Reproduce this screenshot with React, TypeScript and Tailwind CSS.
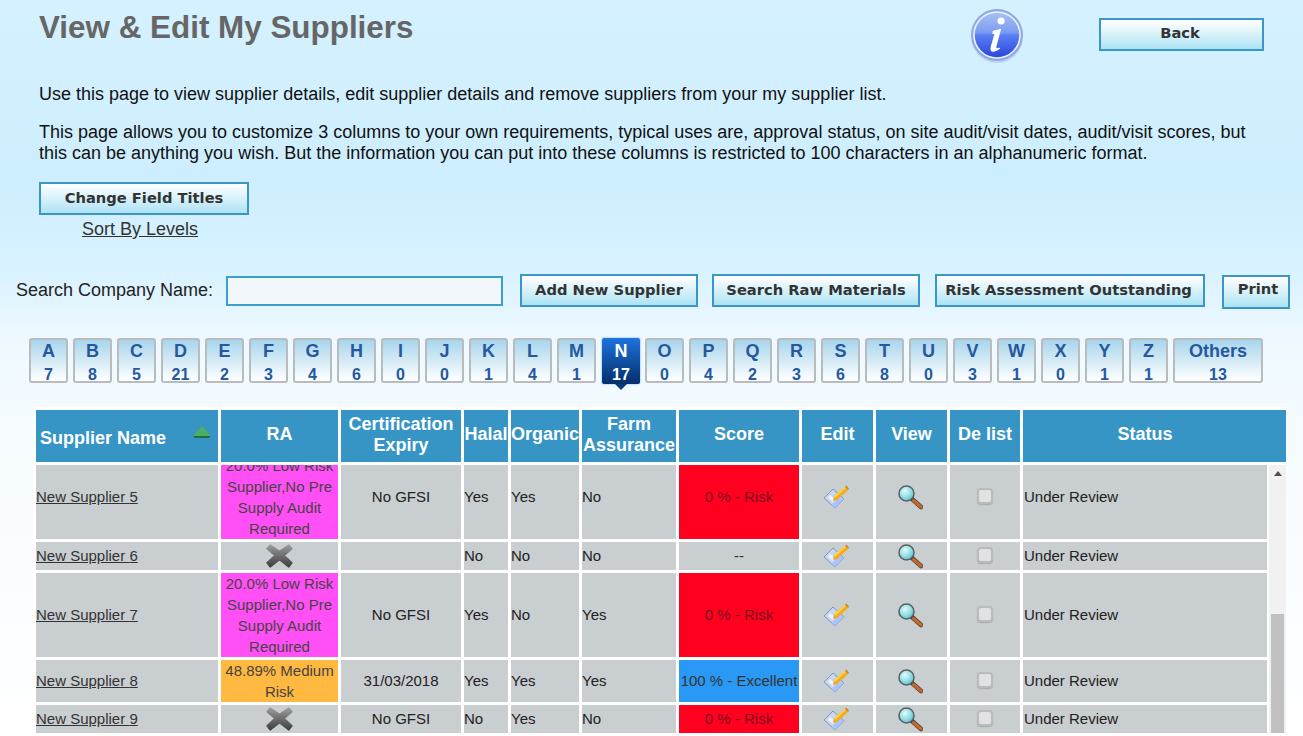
import React from "react";

const letters: [string, number][] = [["A",7],["B",8],["C",5],["D",21],["E",2],["F",3],["G",4],["H",6],["I",0],["J",0],["K",1],["L",4],["M",1],["N",17],["O",0],["P",4],["Q",2],["R",3],["S",6],["T",8],["U",0],["V",3],["W",1],["X",0],["Y",1],["Z",1]];

const bodyCols = "grid grid-cols-[182px_117px_120px_44px_68px_94px_120px_71px_71px_70px_244px] gap-[3px]";
const headCols = "grid grid-cols-[182px_117px_120px_44px_68px_94px_120px_71px_71px_70px_263px] gap-[3px]";
const btn = "h-[33px] border-2 border-[#3a96c4] bg-gradient-to-b from-white to-[#ace3f5] text-[#333] font-bold text-[14.700px] font-['DejaVu_Sans',sans-serif] leading-none pb-[1px]";

function InfoIcon() {
  return (
    <svg width="56" height="56" viewBox="0 0 54 54">
      <defs>
        <linearGradient id="ig" x1="0" y1="0" x2="0" y2="1">
          <stop offset="0" stopColor="#a9c1f5" />
          <stop offset="0.45" stopColor="#7a9bf0" />
          <stop offset="0.5" stopColor="#5a80f4" />
          <stop offset="1" stopColor="#2a46dc" />
        </linearGradient>
      </defs>
      <circle cx="27" cy="29" r="25" fill="#8fa6c8" opacity="0.35" />
      <circle cx="27" cy="27" r="25" fill="#8ea6ea" />
      <circle cx="27" cy="27" r="23" fill="#eef3ff" />
      <circle cx="27" cy="27" r="21.5" fill="url(#ig)" />
      <circle cx="31" cy="13.5" r="3.4" fill="#fff" />
      <path d="M23 23 L31 21 L26.5 38 Q26 41 29 39 L30 40 Q25 44 22 43 Q20 42 21 38 L24.500 26 L22.500 26 Z" fill="#fff" />
    </svg>
  );
}

function EditIcon() {
  return (
    <svg className="-ml-[4px]" width="28" height="26" viewBox="0 0 28 26">
      <path d="M2 14 L11 5 L22 15 L13 24 Z" fill="#c6d6f5" stroke="#7f96b8" strokeWidth="1" />
      <path d="M8 11 L13 15 L11 18 L6 14 Z" fill="#eef3fb" />
      <path d="M14 16 L19 13 L22 15 L13 24 L10 21 Z" fill="#a9c5fb" />
      <path d="M12 12 L23 3 L26 6 L15 16 L11 17 Z" fill="#f6a91e" />
      <path d="M12 12 L23 3 L24 4 L13 14 Z" fill="#ffd640" />
      <path d="M23 3 L24.500 1.500 L27 4.500 L26 6 Z" fill="#d2862a" />
    </svg>
  );
}

function MagIcon() {
  return (
    <svg className="-ml-[4px]" width="26" height="26" viewBox="0 0 26 26">
      <defs>
        <radialGradient id="mg" cx="0.4" cy="0.35" r="0.7">
          <stop offset="0" stopColor="#e5fafa" />
          <stop offset="0.6" stopColor="#8ddde3" />
          <stop offset="1" stopColor="#5cb8c8" />
        </radialGradient>
      </defs>
      <path d="M15 15 L24 23" stroke="#4b4038" strokeWidth="4.500" strokeLinecap="round" />
      <path d="M16.500 16.500 L24 23" stroke="#c46a28" strokeWidth="3" strokeLinecap="round" />
      <circle cx="9.500" cy="9.500" r="7.500" fill="url(#mg)" stroke="#5a5f62" strokeWidth="1.500" />
    </svg>
  );
}

function XIcon() {
  return (
    <svg className="-ml-[1px] -mt-[1px]" width="29" height="27" viewBox="0 0 28 26">
      <defs>
        <linearGradient id="xg" x1="0" y1="0" x2="0" y2="1">
          <stop offset="0" stopColor="#9a9a9a" />
          <stop offset="1" stopColor="#3f3f3f" />
        </linearGradient>
      </defs>
      <path d="M5 3 L14 9 L23 3 L26 6.500 L18.500 13 L26 20 L23 24 L14 17 L5 24 L2 20 L9.500 13 L2 6.500 Z" fill="url(#xg)" stroke="url(#xg)" strokeWidth="1.500" strokeLinejoin="round" />
    </svg>
  );
}

function Box() {
  return <span className="block w-[16px] h-[16px] -mt-[3px] rounded-[4px] bg-[#e2e2e2] border-2 border-[#b9bcbc] shadow-[0_1px_1px_#aaa]" />;
}

type Row = { n: number; h: string; ra: React.ReactNode; raBg?: string; cert: string; halal: string; org: string; farm: string; score: string; scoreBg?: string };

const rows: Row[] = [
  { n: 5, h: "h-[84px]", ra: "20.0% Low Risk Supplier,No Pre Supply Audit Required", raBg: "bg-[#ff4ff5]", cert: "No GFSI", halal: "Yes", org: "Yes", farm: "No", score: "0 % - Risk", scoreBg: "bg-[#ff001f]" },
  { n: 6, h: "h-[28px]", ra: <XIcon />, cert: "", halal: "No", org: "No", farm: "No", score: "--" },
  { n: 7, h: "h-[84px]", ra: "20.0% Low Risk Supplier,No Pre Supply Audit Required", raBg: "bg-[#ff4ff5]", cert: "No GFSI", halal: "Yes", org: "No", farm: "Yes", score: "0 % - Risk", scoreBg: "bg-[#ff001f]" },
  { n: 8, h: "h-[42px]", ra: "48.89% Medium Risk", raBg: "bg-[#ffb840]", cert: "31/03/2018", halal: "Yes", org: "Yes", farm: "Yes", score: "100 % - Excellent", scoreBg: "bg-[#2a98f5]" },
  { n: 9, h: "h-[28px]", ra: <XIcon />, cert: "No GFSI", halal: "No", org: "Yes", farm: "No", score: "0 % - Risk", scoreBg: "bg-[#ff001f]" },
];

const cell = "bg-[#c9ced0] flex items-center";
const head = "bg-[#3695c5] text-white font-bold text-[18px] leading-[21px] flex items-center justify-center text-center pb-[3px]";

export default function App() {
  return (
    <div className="h-[736px] w-[1303px] overflow-hidden font-['Liberation_Sans',Arial,sans-serif] text-[18px] text-[#111] bg-[linear-gradient(180deg,#d5f1ff_0px,#cdeeff_180px,#d8f2ff_270px,#eef9ff_340px,#f5fbff_420px,#ffffff_736px)]">
      <div className="flex items-start pl-[39px] h-[84px]">
        <h1 className="w-[930px] pt-[10px] text-[31.400px] leading-[36px] font-bold text-[#666]">View &amp; Edit My Suppliers</h1>
        <div className="pt-[7px] w-[130px]"><InfoIcon /></div>
        <button className={`${btn} mt-[18px] w-[165px] !pb-[3px] pr-[3px]`}>Back</button>
      </div>
      <p className="pl-[39px] pt-[1px] leading-[18px]">Use this page to view supplier details, edit supplier details and remove suppliers from your my supplier list.</p>
      <p className="pl-[39px] pr-[50px] mt-[19px] leading-[21px]">This page allows you to customize 3 columns to your own requirements, typical uses are, approval status, on site audit/visit dates, audit/visit scores, but this can be anything you wish. But the information you can put into these columns is restricted to 100 characters in an alphanumeric format.</p>
      <div className="pl-[39px] mt-[18px]">
        <button className={`${btn} w-[210px] block`}>Change Field Titles</button>
        <a className="block ml-[43px] mt-[4px] text-[#333] underline text-[18px] leading-[20px]">Sort By Levels</a>
      </div>
      <div className="flex items-center pl-[16px] mt-[35px] h-[33px]">
        <span className="w-[210px] text-[#222] text-[18px]">Search Company Name:</span>
        <input className="w-[277px] h-[30px] border-2 border-[#3aa0cc] bg-[#f0f6fa]" />
        <button className={`${btn} ml-[17px] w-[178px]`}>Add New Supplier</button>
        <button className={`${btn} ml-[14px] w-[208px]`}>Search Raw Materials</button>
        <button className={`${btn} ml-[15px] w-[270px] pr-[3px]`}>Risk Assessment Outstanding</button>
        <button className={`${btn} ml-[17px] w-[68px] mt-[2px] h-[34px] !pb-[4px] pl-[4px]`}>Print</button>
      </div>
      <div className="flex items-start pl-[29px] mt-[31px] h-[69px] gap-[5px] font-bold text-[#2458a0] text-center">
        {letters.map(([l, c]) =>
          l === "N" ? (
            <div key={l} className="relative w-[38px] h-[46px] ml-[1px] rounded-[2px] bg-gradient-to-b from-[#1e73de] to-[#04306c] text-white shadow-[0_0_2px_#5aa0f0] text-[18px] leading-[22px] pt-[2px]">
              <div>{l}</div>
              <div className="text-[16px] leading-[20px] mt-[3px]">{c}</div>
              <span className="absolute left-[13px] top-[46px] border-x-[6px] border-x-transparent border-t-[6px] border-t-[#0a3a78]" />
            </div>
          ) : (
            <div key={l} className="w-[39px] h-[45px] rounded-[3px] border-2 border-[#b9bcbe] bg-gradient-to-b from-[#a8d5ec] to-[#ffffff] text-[18px] leading-[22px]">
              <div>{l}</div>
              <div className="text-[16px] leading-[19px] mt-[3px]">{c}</div>
            </div>
          )
        )}
        <div className="w-[90px] h-[45px] rounded-[3px] border-2 border-[#b9bcbe] bg-gradient-to-b from-[#a8d5ec] to-[#ffffff] text-[18px] leading-[22px]">
          <div>Others</div>
          <div className="text-[16px] leading-[19px] mt-[3px]">13</div>
        </div>
      </div>
      <div className="ml-[33px] w-[1253px] bg-white pt-[3px] pl-[3px]">
        <div className={`${headCols} h-[52px]`}>
          <div className={`${head} !justify-start pl-[4px] relative !pb-0 pt-[4px]`}>
            Supplier Name
            <svg className="absolute left-[156px] top-[15px]" width="20" height="14" viewBox="0 0 20 14">
              <path d="M10 1 L19 11 L1 11 Z" fill="#4caf62" />
              <path d="M1 11 L19 11 L17 13 L3 13 Z" fill="#1f6e4a" />
            </svg>
          </div>
          <div className={head}>RA</div>
          <div className={`${head} !pb-[2px]`}>Certification Expiry</div>
          <div className={head}>Halal</div>
          <div className={head}>Organic</div>
          <div className={`${head} !pb-[2px]`}>Farm Assurance</div>
          <div className={head}>Score</div>
          <div className={head}>Edit</div>
          <div className={head}>View</div>
          <div className={head}>De list</div>
          <div className={`${head} pr-[19px]`}>Status</div>
        </div>
        <div className="flex mt-[3px] h-[268px] overflow-hidden text-[15px] text-[#222]">
          <div className="w-[1231px] shrink-0">
            <div className="-mt-[10px] flex flex-col gap-[3px]">
              {rows.map((r) => (
                <div key={r.n} className={`${bodyCols} ${r.h}`}>
                  <div className={cell}><a className="underline text-[#333]">New Supplier {r.n}</a></div>
                  <div className={`${r.raBg ?? "bg-[#c9ced0]"} flex items-center justify-center text-center leading-[21px] text-[#444]`}>{r.ra}</div>
                  <div className={`${cell} justify-center`}>{r.cert}</div>
                  <div className={cell}>{r.halal}</div>
                  <div className={cell}>{r.org}</div>
                  <div className={cell}>{r.farm}</div>
                  <div className={`${r.scoreBg ?? "bg-[#c9ced0]"} flex items-center justify-center ${r.scoreBg === "bg-[#ff001f]" ? "text-[#7a1020]" : "text-[#333]"}`}>{r.score}</div>
                  <div className={`${cell} justify-center`}><EditIcon /></div>
                  <div className={`${cell} justify-center`}><MagIcon /></div>
                  <div className={`${cell} justify-center`}><Box /></div>
                  <div className={`${cell} pl-[1px]`}>Under Review</div>
                </div>
              ))}
            </div>
          </div>
          <div className="w-[17px] ml-[2px] bg-[#f1f1f1] flex flex-col items-center">
            <span className="mt-[6px] border-x-[4px] border-x-transparent border-b-[5px] border-b-[#505050]" />
            <span className="w-[13px] mt-[138px] h-[130px] bg-[#c1c1c1]" />
          </div>
        </div>
      </div>
    </div>
  );
}
